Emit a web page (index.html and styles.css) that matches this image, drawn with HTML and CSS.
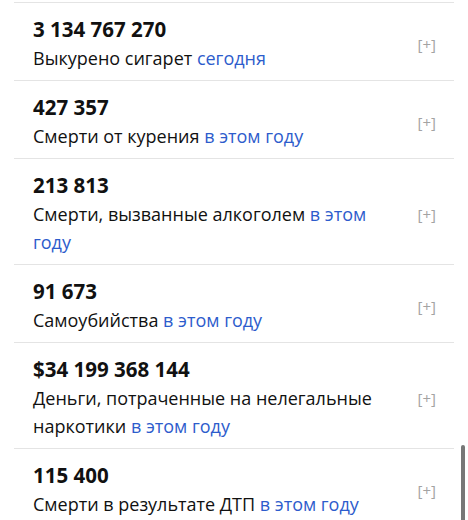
FILE: index.html
```html
<!DOCTYPE html>
<html lang="ru">
<head>
<meta charset="utf-8">
<link rel="stylesheet" href="styles.css">
</head>
<body>
<div class="list">
  <div class="row">
    <div class="text">
      <div class="num">3 134 767 270</div>
      <div class="label">Выкурено сигарет <span class="when">сегодня</span></div>
    </div>
    <div class="more">[+]</div>
  </div>
  <div class="row">
    <div class="text">
      <div class="num">427 357</div>
      <div class="label">Смерти от курения <span class="when">в этом году</span></div>
    </div>
    <div class="more">[+]</div>
  </div>
  <div class="row">
    <div class="text">
      <div class="num">213 813</div>
      <div class="label">Смерти, вызванные алкоголем <span class="when">в этом году</span></div>
    </div>
    <div class="more">[+]</div>
  </div>
  <div class="row">
    <div class="text">
      <div class="num">91 673</div>
      <div class="label">Самоубийства <span class="when">в этом году</span></div>
    </div>
    <div class="more">[+]</div>
  </div>
  <div class="row">
    <div class="text">
      <div class="num">$34 199 368 144</div>
      <div class="label">Деньги, потраченные на нелегальные наркотики <span class="when">в этом году</span></div>
    </div>
    <div class="more">[+]</div>
  </div>
  <div class="row">
    <div class="text">
      <div class="num">115 400</div>
      <div class="label">Смерти в результате ДТП <span class="when">в этом году</span></div>
    </div>
    <div class="more">[+]</div>
  </div>
</div>
<div class="scrollbar"></div>
</body>
</html>
```

FILE: styles.css
```css
html, body {
  margin: 0;
  padding: 0;
  background: #fff;
  overflow: hidden;
  height: 520px;
}
body {
  font-family: "Open Sans", "Noto Sans", sans-serif;
  color: #111;
  padding-top: 2px;
}
.list {
  margin: 0 14px;
  border-top: 1px solid #e4e4e4;
}
.row {
  display: flex;
  align-items: center;
  padding: 12px 18px 8px 19px;
  border-bottom: 1px solid #e4e4e4;
}
.text {
  flex: 1;
  max-width: 350px;
}
.num {
  font-size: 20.5px;
  font-weight: 700;
  line-height: 28px;
  margin-bottom: 1px;
}
.label {
  font-size: 18px;
  line-height: 28px;
}
.when {
  color: #2d5ccc;
}
.more {
  margin-left: auto;
  font-size: 15px;
  color: #a3a3a3;
}
.scrollbar {
  position: absolute;
  left: 461px;
  top: 445px;
  width: 4px;
  height: 80px;
  border-radius: 2px;
  background: #777;
}
```
